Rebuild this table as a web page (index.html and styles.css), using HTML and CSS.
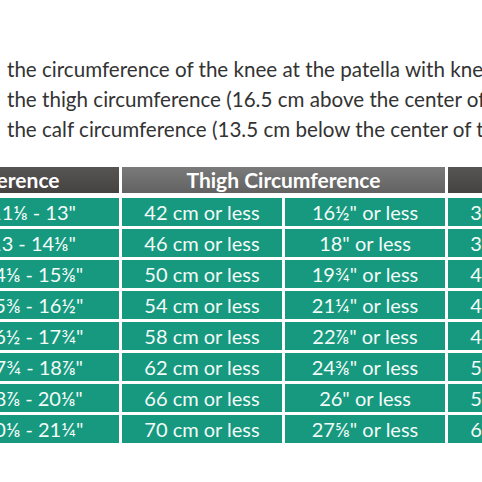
FILE: index.html
```html
<!DOCTYPE html>
<html lang="en">
<head>
    <meta charset="UTF-8">
    <meta name="viewport" content="width=device-width, initial-scale=1.0">
    <title>Size chart</title>
    <link rel="stylesheet" href="styles.css">
</head>
<body>

<div class="chart">
    <div class="steps">
        <p>the circumference of the knee at the patella with knee bent</p>
        <p>the thigh circumference (16.5 cm above the center of the patella)</p>
        <p>the calf circumference (13.5 cm below the center of the patella)</p>
    </div>

    <div class="sizes">
        <div class="head dark span2">Knee Circumference</div>
        <div class="head light span2">Thigh Circumference</div>
        <div class="head dark span2">Calf Circumference</div>

        <div class="cell">28 - 33 cm</div><div class="cell">11⅛ - 13"</div>
        <div class="cell">42 cm or less</div><div class="cell">16½" or less</div>
        <div class="cell">33 cm or less</div><div class="cell">13" or less</div>

        <div class="cell">33 - 36 cm</div><div class="cell">13 - 14⅛"</div>
        <div class="cell">46 cm or less</div><div class="cell">18" or less</div>
        <div class="cell">36 cm or less</div><div class="cell">14⅛" or less</div>

        <div class="cell">36 - 39 cm</div><div class="cell">14⅛ - 15⅜"</div>
        <div class="cell">50 cm or less</div><div class="cell">19¾" or less</div>
        <div class="cell">40 cm or less</div><div class="cell">15¾" or less</div>

        <div class="cell">39 - 42 cm</div><div class="cell">15⅜ - 16½"</div>
        <div class="cell">54 cm or less</div><div class="cell">21¼" or less</div>
        <div class="cell">44 cm or less</div><div class="cell">17⅜" or less</div>

        <div class="cell">42 - 45 cm</div><div class="cell">16½ - 17¾"</div>
        <div class="cell">58 cm or less</div><div class="cell">22⅞" or less</div>
        <div class="cell">48 cm or less</div><div class="cell">18⅞" or less</div>

        <div class="cell">45 - 48 cm</div><div class="cell">17¾ - 18⅞"</div>
        <div class="cell">62 cm or less</div><div class="cell">24⅜" or less</div>
        <div class="cell">52 cm or less</div><div class="cell">20½" or less</div>

        <div class="cell">48 - 51 cm</div><div class="cell">18⅞ - 20⅛"</div>
        <div class="cell">66 cm or less</div><div class="cell">26" or less</div>
        <div class="cell">56 cm or less</div><div class="cell">22" or less</div>

        <div class="cell">51 - 54 cm</div><div class="cell">20⅛ - 21¼"</div>
        <div class="cell">70 cm or less</div><div class="cell">27⅝" or less</div>
        <div class="cell">60 cm or less</div><div class="cell">23⅝" or less</div>
    </div>
</div>

</body>
</html>
```

FILE: styles.css
```css
body {
    margin: 0;
    background-color: #fff;
    font-family: Lato, "Open Sans", sans-serif;
    overflow: hidden;
}
.chart {
    width: 482px;
    height: 482px;
    overflow: hidden;
    padding-top: 54px;
    box-sizing: border-box;
}
.steps {
    padding-left: 7px;
    color: #333;
    font-size: 20.6px;
    line-height: 30px;
    white-space: nowrap;
}
.steps p {
    margin: 0;
}
.sizes {
    display: grid;
    /* the chart is cropped on the left, the first column is mostly hidden */
    grid-template-columns: 134px 172px 160px 160px 160px 160px;
    grid-auto-rows: 28px;
    gap: 3px;
    margin-top: 23px;
    margin-left: -190px;
}
.head {
    height: 26px;
    color: #fff;
    font-weight: bold;
    font-size: 21px;
    line-height: 26px;
    text-align: center;
    white-space: nowrap;
}
.span2 {
    grid-column: span 2;
}
.dark {
    background: linear-gradient(#575454, #454242);
}
.light {
    background: linear-gradient(#7a7a7a, #626262);
}
.cell {
    background-color: #16997f;
    color: #f4fbf8;
    font-size: 20px;
    line-height: 28px;
    text-align: center;
    white-space: nowrap;
}
```
